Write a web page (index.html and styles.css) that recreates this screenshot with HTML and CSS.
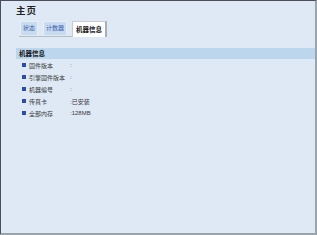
FILE: index.html
```html
<!DOCTYPE html>
<html>
<head>
<meta charset="utf-8">
<link rel="stylesheet" href="styles.css">
</head>
<body>
<div class="frame">
  <div class="title">主页</div>
  <div class="tabs">
    <div class="tab">状态</div>
    <div class="tab">计数器</div>
    <div class="tab active">机器信息</div>
  </div>
  <div class="section">
    <div class="band">机器信息</div>
    <div class="rows">
      <div class="row"><span class="sq"></span><span class="lbl">固件版本</span><span class="val">:</span></div>
      <div class="row"><span class="sq"></span><span class="lbl">引擎固件版本</span><span class="val">:</span></div>
      <div class="row"><span class="sq"></span><span class="lbl">机器编号</span><span class="val">:</span></div>
      <div class="row"><span class="sq"></span><span class="lbl">传真卡</span><span class="val">:已安装</span></div>
      <div class="row"><span class="sq"></span><span class="lbl">全部内存</span><span class="val">:128MB</span></div>
    </div>
  </div>
</div>
</body>
</html>
```
FILE: styles.css
```css
html, body { margin: 0; padding: 0; }
body { font-family: "Liberation Sans", "Noto Sans CJK SC", sans-serif; white-space: nowrap; }
.frame {
  width: 317px; height: 235px; box-sizing: border-box;
  background: #dee9f5;
  border-top: 1px solid #4a4e55;
  border-left: 1px solid #4a4e55;
  border-right: 2px solid #9aa4ad;
  border-bottom: 2px solid #9aa4ad;
  overflow: hidden;
}
.title {
  margin: 3px 0 0 15px;
  font-size: 9.5px; font-weight: bold; color: #222; line-height: 13px;
  letter-spacing: 1px;
}
.tabs {
  display: flex; align-items: flex-end; gap: 5px;
  margin: 3px 0 0 18px; padding-left: 1px;
  width: 87px;
  border-bottom: 1px solid #b8bec6;
  height: 16px;
}
.tab {
  font-size: 6px; line-height: 13px; height: 13px;
  padding: 0 2px; color: #3a5cb0;
  background: #c8dbef; border: 1px solid #e6eef8; border-bottom: none;
  margin-bottom: 1px;
}
.tab.active {
  background: #fff; color: #111; font-weight: bold;
  font-size: 6.5px;
  height: 15px; line-height: 15px; margin-bottom: -1px;
  padding: 0 3px;
  border: 1px solid #c8ccd2; border-bottom: none;
  border-right: 2px solid #a8afb8;
}
.section { margin: 11px 0 0 15px; }
.band {
  background: #bcd6ee; height: 11px; line-height: 11px;
  font-size: 6.5px; font-weight: bold; color: #111; padding-left: 3px;
}
.rows { padding: 0 0 0 6px; }
.row {
  display: flex; align-items: center; height: 12px;
  font-size: 6px; color: #3a3a3a;
}
.sq { width: 4px; height: 4px; background: #2b4fa8; margin-right: 3px; flex: none; }
.lbl { width: 41px; flex: none; }
.val { flex: none; }
```
